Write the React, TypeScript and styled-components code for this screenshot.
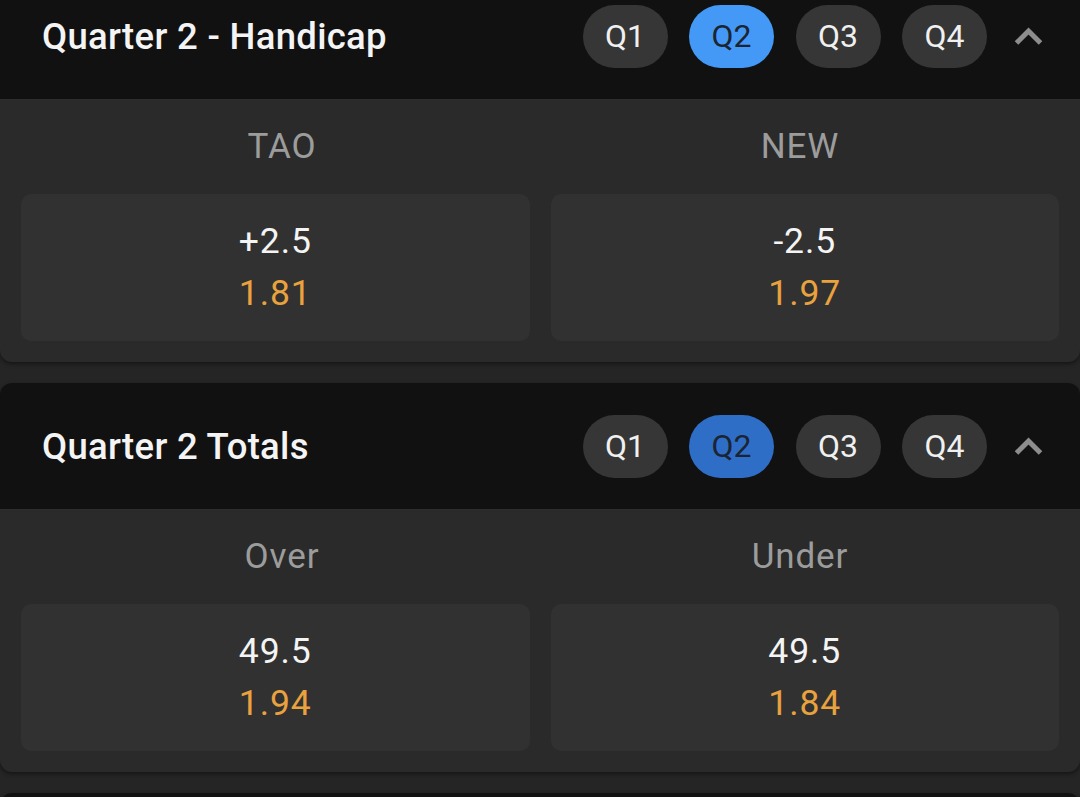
import React from "react";
import styled, { createGlobalStyle } from "styled-components";

const GlobalStyle = createGlobalStyle`
  html, body {
    margin: 0;
    padding: 0;
    background: #252525;
    font-family: Roboto, "Noto Sans", "Liberation Sans", sans-serif;
    -webkit-font-smoothing: antialiased;
  }
  * { box-sizing: border-box; }
`;

const Page = styled.div`
  width: 1080px;
  height: 797px;
  overflow: hidden;
  background: #252525;
`;

const List = styled.div`
  display: flex;
  flex-direction: column;
  gap: 21px;
  margin-top: -27px;
`;

const Card = styled.section`
  border-radius: 12px;
  overflow: hidden;
  background: #2a2a2a;
  box-shadow: 0 2px 4px rgba(0, 0, 0, 0.45);
`;

const Header = styled.header`
  height: 126px;
  display: flex;
  align-items: center;
  background: #111111;
  padding-left: 42px;
`;

const Title = styled.h2`
  margin: 0;
  font-size: 36.5px;
  font-weight: 500;
  color: #f4f4f4;
  letter-spacing: 0.3px;
  padding-top: 1px;
`;

const Pills = styled.div`
  margin-left: auto;
  display: flex;
  gap: 21.5px;
`;

const Pill = styled.button<{ $active?: boolean; $tone?: string }>`
  width: 85px;
  height: 63px;
  border-radius: 32px;
  border: none;
  padding: 0;
  font-family: inherit;
  font-size: 32px;
  font-weight: 400;
  background: ${(p) => (p.$active ? p.$tone : "#363636")};
  color: ${(p) => (p.$active ? "#1b2433" : "#f0f0f0")};
  display: flex;
  align-items: center;
  justify-content: center;
`;

const Toggle = styled.button`
  border: none;
  background: none;
  padding: 0;
  margin-left: 27px;
  margin-right: 37px;
  width: 29px;
  height: 19px;
  display: flex;
  align-items: center;
  justify-content: center;
`;

const Body = styled.div`
  padding: 0 21px 21px;
  border-top: 1px solid #2e2e2e;
`;

const Labels = styled.div`
  display: grid;
  grid-template-columns: 1fr 1fr;
  height: 94px;
  align-items: center;
  padding: 0 0 0 2px;
`;

const Label = styled.div`
  text-align: center;
  font-size: 35px;
  color: #9c9c9c;
  letter-spacing: 0.9px;
  padding-bottom: 1px;
`;

const Boxes = styled.div`
  display: grid;
  grid-template-columns: 1fr 1fr;
  gap: 21px;
`;

const OddsBox = styled.div`
  height: 147px;
  border-radius: 10px;
  background: #313131;
  display: flex;
  flex-direction: column;
  align-items: center;
  justify-content: center;
`;

const Line = styled.div`
  font-size: 35.5px;
  line-height: 52px;
  color: #f4f4f4;
  letter-spacing: 0.9px;
  margin-top: -2px;
`;

const Price = styled.div`
  font-size: 35.5px;
  line-height: 52px;
  color: #e9a23e;
  letter-spacing: 0.9px;
`;

const Chevron = () => (
  <svg width="29" height="19" viewBox="0 0 29 19">
    <polyline
      points="2.5,16 14.5,4 26.5,16"
      fill="none"
      stroke="#8d8d8d"
      strokeWidth="5"
    />
  </svg>
);

type Market = {
  title: string;
  tone: string;
  sides: { label: string; line: string; price: string }[];
};

const markets: Market[] = [
  {
    title: "Quarter 2 - Handicap",
    tone: "#4599f6",
    sides: [
      { label: "TAO", line: "+2.5", price: "1.81" },
      { label: "NEW", line: "-2.5", price: "1.97" },
    ],
  },
  {
    title: "Quarter 2 Totals",
    tone: "#2f6ec6",
    sides: [
      { label: "Over", line: "49.5", price: "1.94" },
      { label: "Under", line: "49.5", price: "1.84" },
    ],
  },
];

const quarters = ["Q1", "Q2", "Q3", "Q4"];

export default function App() {
  return (
    <Page>
      <GlobalStyle />
      <List>
        {markets.map((m) => (
          <Card key={m.title}>
            <Header>
              <Title>{m.title}</Title>
              <Pills>
                {quarters.map((q) => (
                  <Pill key={q} $active={q === "Q2"} $tone={m.tone}>
                    {q}
                  </Pill>
                ))}
              </Pills>
              <Toggle aria-label="collapse">
                <Chevron />
              </Toggle>
            </Header>
            <Body>
              <Labels>
                {m.sides.map((s) => (
                  <Label key={s.label}>{s.label}</Label>
                ))}
              </Labels>
              <Boxes>
                {m.sides.map((s) => (
                  <OddsBox key={s.label}>
                    <Line>{s.line}</Line>
                    <Price>{s.price}</Price>
                  </OddsBox>
                ))}
              </Boxes>
            </Body>
          </Card>
        ))}
        <Card>
          <Header />
        </Card>
      </List>
    </Page>
  );
}
